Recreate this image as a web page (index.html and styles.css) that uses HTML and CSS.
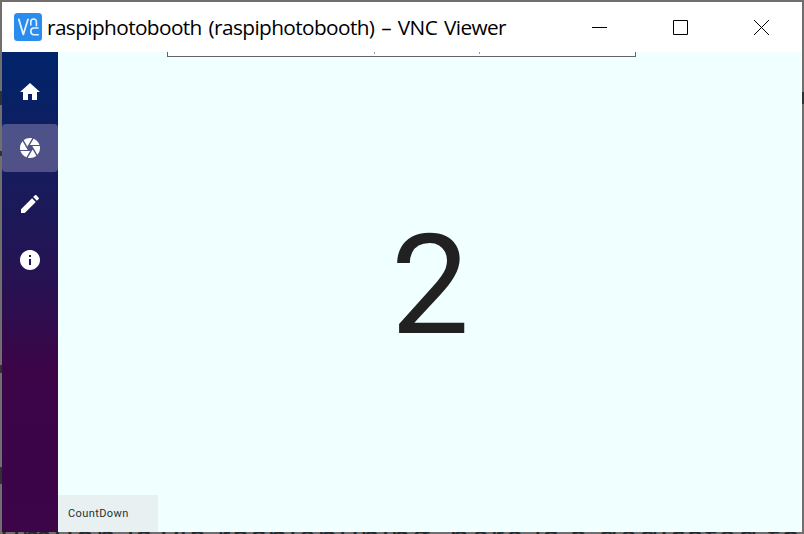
FILE: index.html
```html
<!DOCTYPE html>
<html lang="en">
<head>
<meta charset="utf-8">
<title>raspiphotobooth (raspiphotobooth) – VNC Viewer</title>
<link rel="stylesheet" href="styles.css">
</head>
<body>
<div class="edge-marks" aria-hidden="true">
  <i class="mark m1"></i><i class="mark m2"></i><i class="mark m3"></i><i class="mark m4"></i><i class="mark m5"></i>
</div>
<div class="behind">umuon is via raspiepuning. here is a dedicated to</div>
<main class="window">
  <header class="titlebar">
    <svg class="logo" viewBox="0 0 28 28">
      <rect width="28" height="28" rx="3.5" fill="#2b8cf0"/>
      <g fill="none" stroke="#e4f5ff" stroke-width="1.8" stroke-linecap="round" stroke-linejoin="round">
        <path d="M4.8 6.3 9.3 21.4 14 6.3"/>
        <path d="M16.8 12V8.8Q16.8 6 19.6 6T22.4 8.8V12.8" stroke-width="1.6"/>
        <path d="M24 15H19.8Q16.8 15 16.8 18.3T19.8 21.7H24.3" stroke-width="1.6"/>
      </g>
    </svg>
    <h1 class="title">raspiphotobooth (raspiphotobooth) – VNC Viewer</h1>
    <div class="controls">
      <svg viewBox="0 0 15 15"><path d="M0 7.5H15"/></svg>
      <svg viewBox="0 0 15 15"><path d="M.5.5H14.5V14.5H.5Z"/></svg>
      <svg viewBox="0 0 15 15"><path d="M0 0 15 15M15 0 0 15"/></svg>
    </div>
  </header>
  <div class="screen">
    <nav class="rail">
      <a class="item"><svg viewBox="0 0 24 24"><path d="M10 20v-6h4v6h5v-8h3L12 3 2 12h3v8z"/></svg></a>
      <a class="item active"><svg viewBox="0 0 24 24"><path d="M9.4 10.5l4.77-8.26C13.47 2.09 12.75 2 12 2c-2.4 0-4.6.85-6.32 2.25l3.66 6.35.06-.1zM21.54 9c-.92-2.92-3.15-5.26-6-6.34L11.88 9h9.66zm.26 1h-7.49l.29.5 4.76 8.25C21 16.97 22 14.61 22 12c0-.69-.07-1.35-.2-2zM8.54 12l-3.9-6.75C3.01 7.03 2 9.39 2 12c0 .69.07 1.35.2 2h7.49l-1.15-2zm-6.08 3c.92 2.92 3.15 5.26 6 6.34L12.12 15H2.46zm11.27 0l-3.9 6.76c.7.15 1.42.24 2.17.24 2.4 0 4.6-.85 6.32-2.25l-3.66-6.35-.93 1.6z"/></svg></a>
      <a class="item"><svg viewBox="0 0 24 24"><path d="M3 17.25V21h3.75L17.81 9.94l-3.75-3.75L3 17.25zM20.71 7.04c.39-.39.39-1.02 0-1.41l-2.34-2.34c-.39-.39-1.02-.39-1.41 0l-1.83 1.83 3.75 3.75 1.83-1.83z"/></svg></a>
      <a class="item"><svg viewBox="0 0 24 24"><path d="M12 2C6.48 2 2 6.48 2 12s4.48 10 10 10 10-4.48 10-10S17.52 2 12 2zm1 15h-2v-6h2v6zm0-8h-2V7h2v2z"/></svg></a>
    </nav>
    <section class="content">
      <div class="toolbar-edge"><i></i><i></i></div>
      <div class="count">2</div>
      <div class="status">CountDown</div>
    </section>
  </div>
</main>
</body>
</html>
```
FILE: styles.css
```css
* { box-sizing: border-box; }
html { overflow: hidden; }
body {
  margin: 0;
  width: 804px;
  height: 534px;
  padding: 2px;
  overflow: hidden;
  position: relative;
  background: #706e6e;
}
.window {
  position: relative;
  width: 800px;
  height: 530px;
  display: flex;
  flex-direction: column;
}
.titlebar {
  height: 50px;
  display: flex;
  align-items: center;
  padding: 0 33px 0 12px;
  background: #fff;
}
.logo { width: 28px; height: 28px; flex: none; }
.title {
  margin: 0 0 0 5px;
  font: 400 20.8px/50px "Open Sans", "Noto Sans", sans-serif;
  letter-spacing: -.6px;
  word-spacing: 2px;
  color: #000;
  white-space: nowrap;
}
.controls { display: flex; gap: 66px; margin-left: auto; }
.controls svg {
  width: 15px;
  height: 15px;
  fill: none;
  stroke: #000;
  stroke-width: 1;
}
.screen { flex: 1; display: flex; min-height: 0; }
.rail {
  width: 56px;
  padding-top: 16px;
  display: flex;
  flex-direction: column;
  gap: 8px;
  background: linear-gradient(#00246a 0, #1b1959 155px, #2a1050 245px, #3b0548 315px, #3d0448 100%);
}
.item {
  height: 48px;
  display: flex;
  align-items: center;
  justify-content: center;
  border-radius: 4px;
}
.item.active { background: rgba(240, 218, 240, .28); }
.item svg { width: 24px; height: 24px; fill: #fff; }
.content {
  flex: 1;
  display: flex;
  flex-direction: column;
  background: #f0ffff;
}
.toolbar-edge {
  width: 469px;
  height: 5px;
  margin-left: 109px;
  background: #fff;
  border: 1px solid #60656b;
  border-top: 0;
  display: flex;
}
.toolbar-edge i { width: 1px; height: 2px; background: #999; margin-left: 206px; }
.toolbar-edge i + i { margin-left: 104px; }
.count {
  flex: 1;
  display: flex;
  align-items: center;
  justify-content: center;
  padding-top: 17px;
  font: 400 140px/1 Roboto, sans-serif;
  color: #212121;
}
.status {
  width: 100px;
  height: 37px;
  padding-left: 10px;
  background: #e8f0f2;
  color: #263033;
  font: 400 11px/37px Roboto, sans-serif;
  letter-spacing: .4px;
}
.behind {
  position: absolute;
  left: 0;
  top: 519px;
  font: 34px/36px "Open Sans", sans-serif;
  letter-spacing: .5px;
  color: #252a2e;
  white-space: nowrap;
}
.mark { position: absolute; background: #303236; }
.m1 { left: 0; top: 91px; width: 2px; height: 14px; }
.m2 { left: 0; top: 151px; width: 2px; height: 5px; }
.m3 { left: 0; top: 365px; width: 2px; height: 8px; }
.m4 { left: 0; top: 467px; width: 2px; height: 17px; }
.m5 { left: 802px; top: 92px; width: 2px; height: 12px; }
```
